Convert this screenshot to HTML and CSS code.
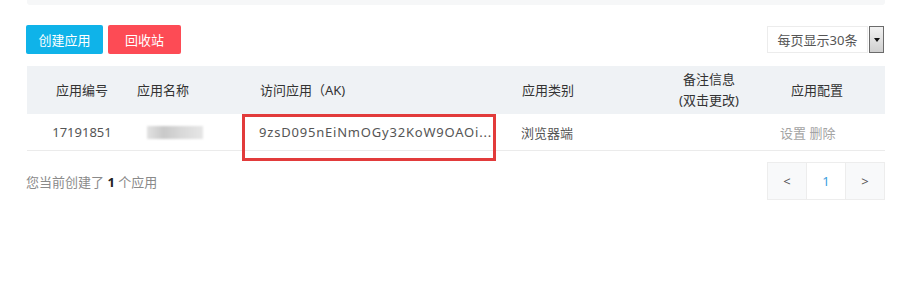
FILE: index.html
```html
<!DOCTYPE html>
<html lang="zh">
<head>
<meta charset="utf-8">
<link rel="stylesheet" href="styles.css">
</head>
<body>
<div class="page">
  <div class="top-bar"></div>
  <div class="toolbar">
    <div class="actions">
      <button class="btn btn-blue">创建应用</button>
      <button class="btn btn-red">回收站</button>
    </div>
    <div class="select">
      <span class="select-text">每页显示30条</span>
      <span class="select-arrow"><span class="tri"></span></span>
    </div>
  </div>
  <div class="table-wrap">
    <table class="apps">
      <colgroup>
        <col class="c1"><col class="c2"><col class="c3"><col class="c4"><col class="c5"><col class="c6">
      </colgroup>
      <thead>
        <tr>
          <th class="center">应用编号</th>
          <th class="name-h">应用名称</th>
          <th class="ak-h">访问应用（AK)</th>
          <th class="type-h">应用类别</th>
          <th class="center">备注信息<br>(双击更改)</th>
          <th class="cfg-h">应用配置</th>
        </tr>
      </thead>
      <tbody>
        <tr>
          <td class="center">17191851</td>
          <td class="name-c"><span class="blur"></span></td>
          <td class="ak-c">9zsD095nEiNmOGy32KoW9OAOi...</td>
          <td class="type-c">浏览器端</td>
          <td></td>
          <td class="cfg-c"><span class="link">设置</span> <span class="link">删除</span></td>
        </tr>
      </tbody>
    </table>
    <div class="highlight"></div>
  </div>
  <div class="footer">
    <div class="count">您当前创建了 <b>1</b> 个应用</div>
    <div class="pager">
      <span class="pg pg-side">&lt;</span>
      <span class="pg pg-cur">1</span>
      <span class="pg pg-side">&gt;</span>
    </div>
  </div>
</div>
</body>
</html>
```
FILE: styles.css
```css
html, body {
  margin: 0;
  padding: 0;
  background: #fff;
}
body {
  font-family: "Noto Sans", "Noto Sans CJK SC", sans-serif;
  font-size: 13px;
  color: #555;
}
.page {
  margin-left: 26px;
  width: 859px;
}
.top-bar {
  margin-left: 1px;
  height: 5px;
  background: #f6f7f8;
  border-radius: 0 0 3px 3px;
}
.toolbar {
  margin-top: 20px;
  display: flex;
  justify-content: space-between;
  align-items: flex-start;
}
.actions {
  display: flex;
  gap: 5px;
}
.btn {
  height: 29px;
  border: none;
  border-radius: 2px;
  color: #fff;
  font-family: inherit;
  font-size: 13px;
  padding: 0;
  cursor: pointer;
}
.btn-blue {
  width: 77px;
  background: #0fb3e9;
}
.btn-red {
  width: 73px;
  background: #fd4b55;
}
.select {
  margin-top: 1px;
  margin-right: 1px;
  display: flex;
  align-items: stretch;
  height: 27px;
}
.select-text {
  width: 101px;
  box-sizing: border-box;
  border: 1px solid #ececec;
  display: flex;
  align-items: center;
  justify-content: center;
  color: #555;
  font-size: 13px;
}
.select-arrow {
  margin-left: 1px;
  width: 15px;
  box-sizing: border-box;
  border: 1px solid #6b6b6b;
  background: linear-gradient(#f2f2f2, #cfcfcf);
  display: flex;
  align-items: center;
  justify-content: center;
}
.tri {
  width: 0;
  height: 0;
  border-left: 3px solid transparent;
  border-right: 3px solid transparent;
  border-top: 4px solid #111;
}
.table-wrap {
  position: relative;
  margin-top: 12px;
  margin-left: 1px;
}
.apps {
  width: 858px;
  border-collapse: collapse;
  table-layout: fixed;
}
.c1 { width: 110px; }
.c2 { width: 106px; }
.c3 { width: 253px; }
.c4 { width: 148px; }
.c5 { width: 130px; }
.c6 { width: 111px; }
.apps thead tr {
  height: 48px;
  background: #eff2f5;
}
.apps th {
  font-weight: normal;
  color: #333;
  text-align: left;
  padding: 0;
  line-height: 21px;
}
.apps td {
  padding: 0;
  height: 36px;
  border-bottom: 1px solid #ebebeb;
  color: #555;
}
.center { text-align: center !important; }
.name-h { padding-left: 0; }
.ak-h { padding-left: 17px !important; }
.type-h { padding-left: 26px !important; }
.cfg-h { padding-left: 17px !important; }
.name-c { padding-left: 10px !important; }
.ak-c { padding-left: 16px !important; white-space: nowrap; overflow: hidden; letter-spacing: 0.8px; }
.type-c { padding-left: 25px !important; }
.cfg-c { padding-left: 6px !important; }
.link { color: #a3a3a3; }
.blur {
  display: block;
  width: 56px;
  height: 13px;
  background: linear-gradient(90deg, #e2e2e2, #c9c9c9 30%, #d8d8d8 60%, #e6e6e6);
  filter: blur(1px);
}
.highlight {
  position: absolute;
  left: 215px;
  top: 48px;
  width: 254px;
  height: 47px;
  box-sizing: border-box;
  border: 3px solid #e23b3b;
}
.footer {
  margin-top: 11px;
  display: flex;
  justify-content: space-between;
  align-items: center;
}
.count {
  color: #8a8a8a;
}
.count b {
  color: #222;
  font-weight: bold;
}
.pager {
  display: flex;
  border: 1px solid #ededed;
}
.pg {
  width: 38px;
  height: 36px;
  display: flex;
  align-items: center;
  justify-content: center;
  font-size: 13px;
}
.pg-side {
  background: #f8f9fa;
  color: #555;
}
.pg-cur {
  background: #fff;
  color: #3b9ede;
  border-left: 1px solid #ededed;
  border-right: 1px solid #ededed;
}
```
